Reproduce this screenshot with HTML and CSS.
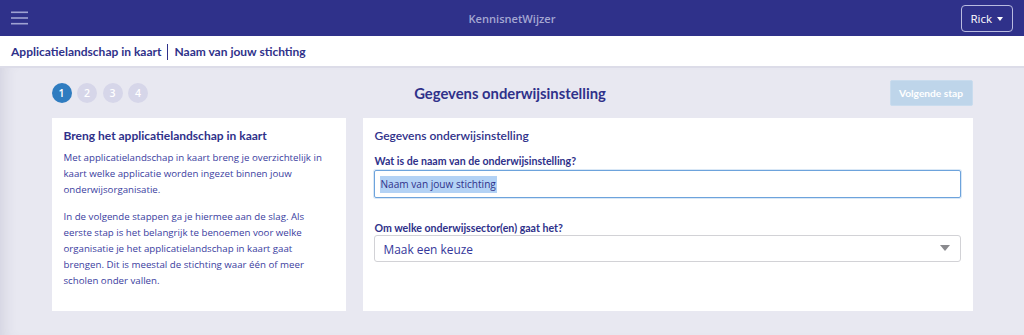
FILE: index.html
```html
<!DOCTYPE html>
<html lang="nl">
<head>
<meta charset="utf-8">
<title>KennisnetWijzer</title>
<link rel="stylesheet" href="styles.css">
</head>
<body>
<header class="topbar">
  <button class="hamburger" aria-label="Menu">
    <svg width="17" height="14" viewBox="0 0 17 14"><rect x="0" y="0.5" width="17" height="1.6" fill="#9fa2d2"/><rect x="0" y="6.2" width="17" height="1.6" fill="#9fa2d2"/><rect x="0" y="11.9" width="17" height="1.6" fill="#9fa2d2"/></svg>
  </button>
  <div class="brand">KennisnetWijzer</div>
  <button class="user">Rick <span class="caret"></span></button>
</header>
<nav class="crumbs">
  <span>Applicatielandschap in kaart</span><span class="sep"></span><span>Naam van jouw stichting</span>
</nav>
<main class="main">
  <div class="container">
    <div class="stepbar">
      <ol class="steps">
        <li class="step active">1</li>
        <li class="step">2</li>
        <li class="step">3</li>
        <li class="step">4</li>
      </ol>
      <h1 class="title">Gegevens onderwijsinstelling</h1>
      <button class="next">Volgende stap</button>
    </div>
    <div class="cards">
      <section class="card info">
        <h2 class="card-title">Breng het applicatielandschap in kaart</h2>
        <p>Met applicatielandschap in kaart breng je overzichtelijk in kaart welke applicatie worden ingezet binnen jouw onderwijsorganisatie.</p>
        <p>In de volgende stappen ga je hiermee aan de slag. Als eerste stap is het belangrijk te benoemen voor welke organisatie je het applicatielandschap in kaart gaat brengen. Dit is meestal de stichting waar één of meer scholen onder vallen.</p>
      </section>
      <section class="card form">
        <h2 class="card-title light">Gegevens onderwijsinstelling</h2>
        <label class="label first">Wat is de naam van de onderwijsinstelling?</label>
        <div class="input focus"><span class="selected">Naam van jouw stichting</span></div>
        <label class="label second">Om welke onderwijssector(en) gaat het?</label>
        <div class="select">Maak een keuze<span class="arrow"></span></div>
      </section>
    </div>
  </div>
</main>
</body>
</html>
```
FILE: styles.css
```css
* { box-sizing: border-box; }
html, body { margin: 0; padding: 0; }
body {
  font-family: "Open Sans", "Noto Sans", sans-serif;
  background: #e8e8f1;
  color: #34379a;
  width: 1024px;
  height: 335px;
  overflow: hidden;
}
.topbar {
  height: 36px;
  background: #2f318a;
  display: flex;
  align-items: center;
  justify-content: space-between;
  padding: 0 11px 0 10px;
  position: relative;
}
.hamburger {
  background: none; border: 0; padding: 0; margin: 0 0 1px 1px;
  width: 17px; height: 14px; display: flex;
}
.brand {
  position: absolute; left: 0; right: 0; text-align: center;
  font-size: 11.1px; font-weight: 600; color: #a4a7d2;
  pointer-events: none;
}
.user {
  height: 27px; padding: 0 9px 0 8px; margin-top: 0;
  background: transparent; color: #fff;
  border: 1px solid #b9bbe0; border-radius: 4px;
  font-family: "Open Sans", sans-serif; font-size: 11.5px;
  display: flex; align-items: center; gap: 5px;
}
.caret {
  width: 0; height: 0; margin-top: 1px;
  border-left: 3.5px solid transparent; border-right: 3.5px solid transparent;
  border-top: 4px solid #fff;
}
.crumbs {
  height: 32px; background: #fff;
  border-bottom: 2px solid #dcdce8;
  display: flex; align-items: center;
  padding: 1px 0 0 11px;
  font-family: Lato, sans-serif; font-weight: 700; font-size: 12px;
  color: #2f318a;
}
.crumbs .sep {
  width: 1px; height: 16px; background: #2f318a; margin: 0 6px;
}
.main {
  height: 267px;
  box-shadow: inset 14px 0 14px -10px rgba(60,60,100,0.12);
}
.container {
  width: 921px; margin: 0 auto; padding-top: 12px;
}
.stepbar {
  display: grid; grid-template-columns: 1fr auto 1fr;
  align-items: center; height: 26px;
}
.steps {
  list-style: none; margin: 0; padding: 0;
  display: flex; gap: 5.5px;
}
.step {
  width: 20px; height: 20px; border-radius: 50%;
  background: #d6d6e9; color: #fff;
  font-size: 10.5px; font-weight: 600;
  display: flex; align-items: center; justify-content: center;
}
.step.active { background: #2f7cc0; }
.title {
  margin: 0; font-family: Lato, sans-serif; font-weight: 700;
  font-size: 14.8px; color: #2f318a; position: relative; left: -2px;
}
.next {
  justify-self: end;
  width: 83px; height: 26px;
  background: #bed5ea; color: #fff; border: 1px solid #c9dcee; border-radius: 2px;
  font-family: Lato, sans-serif; font-weight: 700; font-size: 10.2px;
  padding: 0;
}
.cards {
  display: flex; gap: 17px; margin-top: 12px;
}
.card {
  background: #fff; height: 193px; padding: 10px 12px;
}
.info { width: 296px; }
.form { flex: 1; }
.card-title {
  margin: 0 0 6px; font-family: Lato, sans-serif; font-weight: 700;
  font-size: 12px; color: #2f318a; line-height: 16px;
}
.card-title.light { font-weight: 600; }
.info p {
  margin: 0 0 11px; font-size: 9.7px; line-height: 16px; color: #3a3da0;
}
.label {
  display: block; font-family: Lato, sans-serif; font-weight: 700;
  font-size: 10.6px; color: #2f318a; line-height: 14px;
}
.label.first { margin-top: 10px; }
.label.second { margin-top: 23px; }
.input {
  margin-top: 2px; height: 28px; width: 587px; margin-left: -1px;
  border: 1px solid #6da3dc; border-radius: 2px;
  box-shadow: 0 0 0 1px rgba(109,163,220,0.25);
  display: flex; align-items: center; padding-left: 5px;
  font-size: 10.1px; color: #2f318a;
}
.selected { background: #b3d2f5; padding: 1px 1px; line-height: 15px; }
.select {
  margin-top: 0; height: 27px; width: 587px; margin-left: -1px;
  border: 1px solid #d2d2d6; border-radius: 3px;
  display: flex; align-items: center; padding-left: 9px;
  font-size: 11.9px; color: #34379a; position: relative;
}
.arrow {
  position: absolute; right: 10px; top: 9px;
  border-left: 5px solid transparent; border-right: 5px solid transparent;
  border-top: 6px solid #8a8a8e;
}
```
